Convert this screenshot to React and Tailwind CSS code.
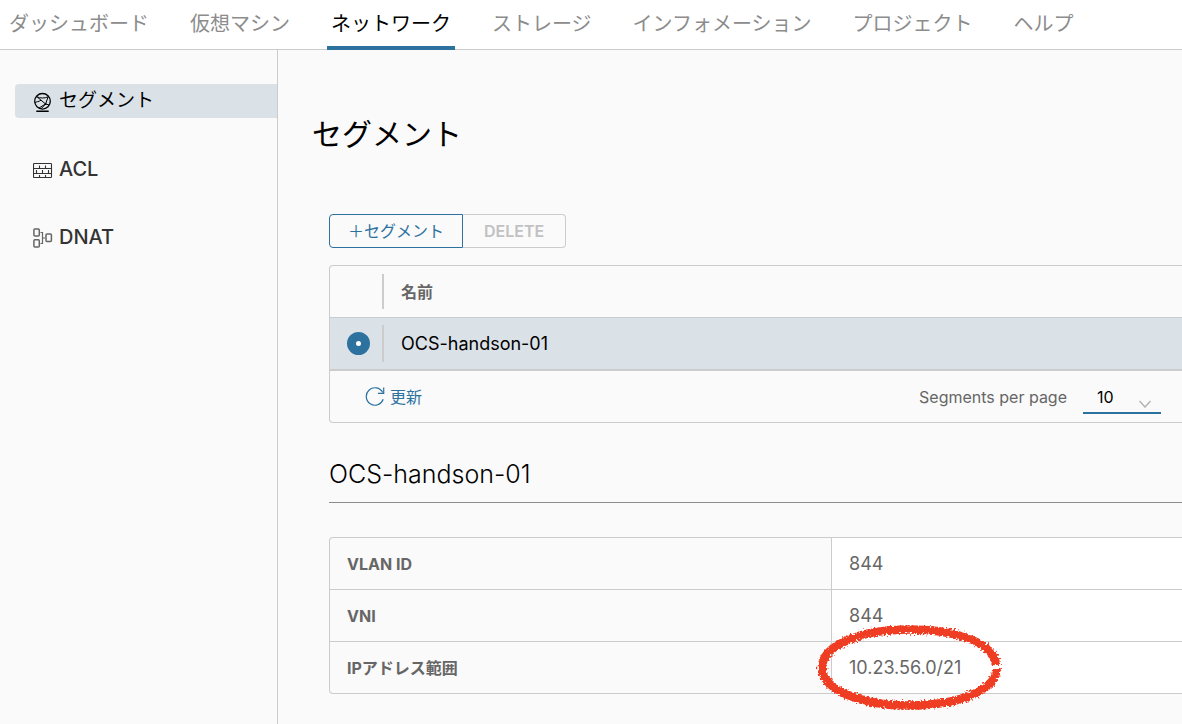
const tabs = [
  'ダッシュボード',
  '仮想マシン',
  'ネットワーク',
  'ストレージ',
  'インフォメーション',
  'プロジェクト',
  'ヘルプ',
];

const details = [
  { label: 'VLAN ID', value: '844' },
  { label: 'VNI', value: '844' },
  { label: 'IPアドレス範囲', value: '10.23.56.0/21', marked: true },
];

function GlobeIcon() {
  return (
    <svg className="mt-0.5 h-5 w-5 shrink-0" viewBox="0 0 20 20" fill="none" stroke="currentColor" strokeWidth="1" aria-hidden="true">
      <circle cx="9.5" cy="9.3" r="7.8" strokeWidth="1.3" />
      <path d="M3.6 4.6C7 6.6 12 6.4 15.4 4.6M4.2 5 12.6 12M15 5 12.6 12 8 16.8M1.9 10.6C3.5 9.600 5.500 10 8 8.200M6 16L12.600 12 16.400 13" />
      <circle cx="12.600" cy="12" r="0.900" fill="currentColor" stroke="none" />
      <path d="M3.800 19.200h11.400" strokeWidth="1.4" strokeLinecap="round" />
    </svg>
  );
}

function FirewallIcon() {
  return (
    <svg className="mt-0.5 h-5 w-5 shrink-0" viewBox="0 0 20 20" fill="none" stroke="currentColor" strokeWidth="1.1" aria-hidden="true">
      <rect x="0.5" y="3.500" width="18" height="14" rx="0.800" />
      <path d="M1 8.500h17.500M1 13.500h17.500M6.500 5.500v3M12.500 5.500v3M3.500 10v3.500M9.500 10v3.500M15.500 10v3.500M6.500 15v2.500M12.500 15v2.500" />
    </svg>
  );
}

function NatIcon() {
  return (
    <svg className="mt-0.5 h-5 w-5 shrink-0 text-[#666666]" viewBox="0 0 20 20" fill="none" stroke="currentColor" strokeWidth="1.5" aria-hidden="true">
      <rect x="0.900" y="0.900" width="5.400" height="7.200" rx="1" />
      <rect x="0.900" y="11.700" width="5.400" height="7.200" rx="1" />
      <rect x="13" y="6" width="5.400" height="7.600" rx="1" />
      <path d="M7.500 4.500h2v11h-2M9.500 10h2.500" strokeWidth="1.200" />
    </svg>
  );
}

function RefreshIcon() {
  return (
    <svg className="h-5 w-5 shrink-0" viewBox="0 0 20 20" fill="none" stroke="currentColor" strokeWidth="1.2" aria-hidden="true">
      <path d="M18.200 12.300A8.700 8.700 0 1 1 17.700 5.500" />
      <path d="M18.700 0.500v5.800h-5.800" />
    </svg>
  );
}

function CrayonEllipse() {
  return (
    <svg
      className="pointer-events-none absolute -top-5 -left-[18px] h-[92px] w-[190px]"
      viewBox="0 0 190 92"
      fill="none"
      aria-hidden="true"
    >
      <filter id="crayon" x="-5%" y="-5%" width="110%" height="110%">
        <feTurbulence type="fractalNoise" baseFrequency="0.5" numOctaves="3" seed="4" result="noise" />
        <feDisplacementMap in="SourceGraphic" in2="noise" scale="7" xChannelSelector="R" yChannelSelector="G" />
      </filter>
      <path
        filter="url(#crayon)"
        d="M182 43C180 20 140 7.500 95 7.500C47 7.500 8 23.500 8 45.500C8 67.500 47 83.500 95 83.500C142 83.500 182 69 182.500 47"
        stroke="#ee3c23"
        strokeWidth="8.500"
      />
    </svg>
  );
}

const sideItems = [
  { label: 'セグメント', Icon: GlobeIcon, active: true },
  { label: 'ACL', Icon: FirewallIcon },
  { label: 'DNAT', Icon: NatIcon },
];

export default function App() {
  return (
    <div className="flex min-h-screen flex-col overflow-x-hidden bg-[#fafafa] font-['Inter','Noto_Sans_CJK_JP',sans-serif] text-black">
      <header className="border-b border-[#cccccc] bg-white">
        <nav className="flex gap-[33px] pl-[5px]">
          {tabs.map((tab) => (
            <a
              key={tab}
              href="#"
              aria-current={tab === 'ネットワーク' ? 'page' : undefined}
              className={
                tab === 'ネットワーク'
                  ? '-mb-px h-[50px] shrink-0 border-b-4 border-[#2d719f] px-1 text-[20px] leading-[48px] text-black'
                  : 'h-[49px] shrink-0 px-1 text-[20px] leading-[48px] text-[#8c8c8c]'
              }
            >
              {tab}
            </a>
          ))}
        </nav>
      </header>

      <div className="flex grow">
        <aside className="w-[278px] shrink-0 border-r border-[#cccccc] pt-[34px] pl-[15px]">
          <nav className="flex flex-col gap-[34px]">
            {sideItems.map(({ label, Icon, active }) => (
              <a
                key={label}
                href="#"
                aria-current={active ? 'page' : undefined}
                className={
                  active
                    ? 'flex h-[34px] items-center gap-[6px] rounded-l bg-[#dae2e8] pl-[18px] text-[19px] text-black'
                    : 'flex h-[34px] items-center gap-[6px] rounded-l pl-[18px] text-[20px] font-medium text-[#333333]'
                }
              >
                <Icon />
                {label}
              </a>
            ))}
          </nav>
        </aside>

        <main className="min-w-0 grow pt-[60px] pb-6">
          <h1 className="pl-[34px] text-[30px] leading-12">セグメント</h1>

          <div className="pl-[51px]">
            <div className="mt-14 flex">
              <button type="button" className="h-[34px] rounded-l border border-[#2d719f] px-[18px] text-base text-[#2d719f]">
                ＋セグメント
              </button>
              <button
                type="button"
                disabled
                className="h-[34px] rounded-r border border-l-0 border-[#cccccc] px-[21px] text-base font-semibold text-[#c1c1c1]"
              >
                DELETE
              </button>
            </div>

            <section className="mt-[17px] rounded-l border border-r-0 border-[#cccccc]">
              <table className="w-full border-separate border-spacing-0 text-left">
                <thead>
                  <tr className="h-[51px]">
                    <th className="w-[54px] p-0" aria-label="選択">
                      <div className="h-[35px] border-r-2 border-[#cccccc]" />
                    </th>
                    <th className="p-0 pl-[17px] text-base font-bold text-[#666666]">名前</th>
                  </tr>
                </thead>
                <tbody>
                  <tr className="h-[54px] bg-[#dae2e8]">
                    <td className="border-t border-b-2 border-[#cccccc] p-0">
                      <div className="flex h-[37px] items-center border-r-2 border-[#cccccc] pl-[17px]">
                        <input
                          type="radio"
                          name="segment"
                          defaultChecked
                          aria-label="OCS-handson-01"
                          className="h-[23px] w-[23px] appearance-none rounded-full border-9 border-[#2d719f] bg-white"
                        />
                      </div>
                    </td>
                    <td className="border-t border-b-2 border-[#cccccc] p-0 pl-[17px] text-lg">OCS-handson-01</td>
                  </tr>
                </tbody>
              </table>
              <div className="flex h-[51px] items-center justify-between pr-[21px] pl-[35px]">
                <button type="button" className="flex items-center gap-[5px] text-base text-[#2d719f]">
                  <RefreshIcon />
                  更新
                </button>
                <div className="flex items-center gap-4">
                  <label htmlFor="per-page" className="text-base text-[#666666]">
                    Segments per page
                  </label>
                  <div className="relative">
                    <select
                      id="per-page"
                      defaultValue="10"
                      className="h-[34px] w-[78px] appearance-none border-b-2 border-[#2d719f] bg-transparent pt-[3px] pl-[14px] text-base"
                    >
                      <option>10</option>
                      <option>20</option>
                      <option>50</option>
                    </select>
                    <svg
                      className="pointer-events-none absolute right-[10px] bottom-[6px] h-2 w-3"
                      viewBox="0 0 12 8"
                      fill="none"
                      stroke="#b3b3b3"
                      strokeWidth="1.5"
                      aria-hidden="true"
                    >
                      <path d="M0.500 1 6 7 11.500 1" />
                    </svg>
                  </div>
                </div>
              </div>
            </section>

            <h2 className="mt-[34px] border-b border-[#8c8c8c] pb-[11px] text-[25px] leading-[34px] font-light">
              OCS-handson-01
            </h2>

            <div className="mt-[34px] rounded-l border border-r-0 border-[#cccccc]">
              <table className="w-full table-fixed border-separate border-spacing-0 text-left text-[#666666]">
                <tbody>
                  {details.map(({ label, value, marked }) => (
                    <tr key={label} className="group">
                      <th
                        scope="row"
                        className="w-[501px] border-t border-[#cccccc] p-0 pl-[17px] text-base font-bold group-first:border-t-0"
                      >
                        {label}
                      </th>
                      <td className="border-t border-l border-[#cccccc] bg-white p-0 text-lg group-first:border-t-0">
                        <div className="relative flex h-[51px] items-center pl-[17px]">
                          {value}
                          {marked && <CrayonEllipse />}
                        </div>
                      </td>
                    </tr>
                  ))}
                </tbody>
              </table>
            </div>
          </div>
        </main>
      </div>
    </div>
  );
}
